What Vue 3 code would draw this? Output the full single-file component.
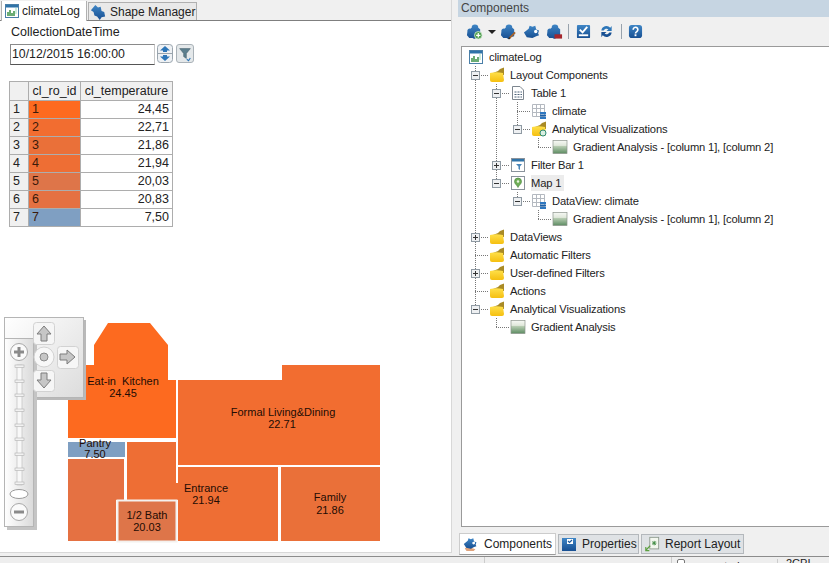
<script setup>
const rows = [
  { id: 1, temp: '24,45', color: '#fd6a1f' },
  { id: 2, temp: '22,71', color: '#f26d30' },
  { id: 3, temp: '21,86', color: '#ea7039' },
  { id: 4, temp: '21,94', color: '#ee6e34' },
  { id: 5, temp: '20,03', color: '#de7549' },
  { id: 6, temp: '20,83', color: '#e57142' },
  { id: 7, temp: '7,50', color: '#7f9fc2' }
];

const tree = [
  { d: 0, icon: 'report', text: 'climateLog' },
  { d: 1, icon: 'folder', text: 'Layout Components', toggle: '-' },
  { d: 2, icon: 'page', text: 'Table 1', toggle: '-' },
  { d: 3, icon: 'grid', text: 'climate' },
  { d: 3, icon: 'folderviz', text: 'Analytical Visualizations', toggle: '-' },
  { d: 4, icon: 'gradient', text: 'Gradient Analysis - [column 1], [column 2]' },
  { d: 2, icon: 'filterbar', text: 'Filter Bar 1', toggle: '+' },
  { d: 2, icon: 'map', text: 'Map 1', toggle: '-', selected: true },
  { d: 3, icon: 'grid', text: 'DataView: climate', toggle: '-' },
  { d: 4, icon: 'gradient', text: 'Gradient Analysis - [column 1], [column 2]' },
  { d: 1, icon: 'folder', text: 'DataViews', toggle: '+' },
  { d: 1, icon: 'folder', text: 'Automatic Filters' },
  { d: 1, icon: 'folder', text: 'User-defined Filters', toggle: '+' },
  { d: 1, icon: 'folder', text: 'Actions' },
  { d: 1, icon: 'folder', text: 'Analytical Visualizations', toggle: '-' },
  { d: 2, icon: 'gradient', text: 'Gradient Analysis' }
];

// page coordinates of the dotted tree guides
const rowY = (i) => 57 + 18 * i;
const guideX = (d) => 475 + 21 * (d - 1);
const vGuides = [
  [guideX(1), rowY(0) + 9, rowY(14)],
  [guideX(2), rowY(1) + 9, rowY(7)],
  [guideX(3), rowY(2) + 9, rowY(4)],
  [guideX(3), rowY(7) + 9, rowY(8)],
  [guideX(4), rowY(4) + 9, rowY(5)],
  [guideX(4), rowY(8) + 9, rowY(9)],
  [guideX(2), rowY(14) + 9, rowY(15)]
];
const hGuides = tree
  .map((r, i) => ({ x1: guideX(r.d), x2: guideX(r.d) + 13, y: rowY(i), d: r.d }))
  .filter((g) => g.d > 0);

const indent = (r) => (r.d === 0 ? 6 : 21 * r.d - 12) + 'px';

const toolbar = ['tbAdd', 'arrow', 'tbEdit', 'tbMove', 'tbDel', 'sep', 'tbCheck', 'tbRefresh', 'sep', 'tbHelp'];

const rooms = [
  { points: '108,323 150,323 168,345 168,380 176,380 176,438 68,438 68,365 94,365 94,345', fill: '#fd6a1f' },
  { points: '178,380 282,380 282,365 380,365 380,465 178,465', fill: '#f26d30' },
  { points: '68,442 125,442 125,457 68,457', fill: '#7f9fc2' },
  { points: '68,459 124,459 124,500 116,500 116,541 68,541', fill: '#e57142' },
  { points: '127,442 176,442 176,483 178,483 178,467 278,467 278,541 178,541 178,500 127,500', fill: '#ee6e34' },
  { points: '281,467 380,467 380,541 281,541', fill: '#ea7039' }
];

const labels = [
  { x: 123, y: 385, text: 'Eat-in  Kitchen' },
  { x: 123, y: 397, text: '24.45' },
  { x: 283, y: 416, text: 'Formal Living&Dining' },
  { x: 282, y: 428, text: '22.71' },
  { x: 95, y: 447, text: 'Pantry' },
  { x: 95, y: 458, text: '7.50' },
  { x: 206, y: 492, text: 'Entrance' },
  { x: 206, y: 504, text: '21.94' },
  { x: 330, y: 501, text: 'Family' },
  { x: 330, y: 514, text: '21.86' },
  { x: 147, y: 519, text: '1/2 Bath' },
  { x: 147, y: 531, text: '20.03' }
];

const ticks = [366, 381, 395, 410, 425, 439, 454, 469, 483];
</script>

<template>
  <div class="app">
    <svg class="defs" width="0" height="0">
      <defs>
        <linearGradient id="gFolder" x1="0" y1="0" x2="0" y2="1"><stop offset="0" stop-color="#ffe04a" /><stop offset="1" stop-color="#f5bf10" /></linearGradient>
        <linearGradient id="gSwatch" x1="0" y1="0" x2="0" y2="1"><stop offset="0" stop-color="#f6f8f4" /><stop offset=".38" stop-color="#e0e8db" /><stop offset=".46" stop-color="#b5cbb0" /><stop offset="1" stop-color="#5d8c62" /></linearGradient>
        <linearGradient id="gBlue" x1="0" y1="0" x2="0" y2="1"><stop offset="0" stop-color="#3f86c6" /><stop offset="1" stop-color="#174f92" /></linearGradient>
        <linearGradient id="gPanel" x1="0" y1="0" x2="1" y2="1"><stop offset="0" stop-color="#ffffff" /><stop offset="1" stop-color="#dcdcdc" /></linearGradient>
        <linearGradient id="gSlider" x1="0" y1="0" x2="1" y2="0"><stop offset="0" stop-color="#ffffff" /><stop offset="1" stop-color="#dadada" /></linearGradient>

        <symbol id="folder" viewBox="0 0 16 16">
          <path d="M4 6L9 4 11 2 15 .5V8H4z" fill="#a98a25" />
          <path d="M1 6Q7 4.500 14 6L15 13Q15 15 13 15H3Q1 15 1 13z" fill="url(#gFolder)" />
        </symbol>
        <symbol id="folderviz" viewBox="0 0 16 16">
          <path d="M4 6L9 4 11 2 15 .5V8H4z" fill="#a98a25" />
          <path d="M1 6Q7 4.500 14 6L15 13Q15 15 13 15H3Q1 15 1 13z" fill="url(#gFolder)" />
          <circle cx="12" cy="12" r="3" fill="#d9efe0" stroke="#2c8a78" />
        </symbol>
        <symbol id="report" viewBox="0 0 16 16">
          <rect x="1.500" y="1.500" width="13" height="13" fill="#fff" stroke="#4a7fa8" />
          <rect x="2" y="2" width="12" height="2.500" fill="#2f73a8" />
          <path d="M4 13V9M6 13V7M8 13V10M10 13V8" stroke="#2d8a3a" stroke-width="1.400" />
          <path d="M11 6h2M11 8h2M11 10h2" stroke="#9db" />
        </symbol>
        <symbol id="page" viewBox="0 0 16 16">
          <path d="M2.500 1.500H10L13.500 5V14.500H2.500z" fill="#fff" stroke="#7d868f" />
          <path d="M4.500 7h2M7.500 7h2M10.500 7h1.500M4.500 9.500h2M7.500 9.500h2M10.500 9.500h1.500M4.500 12h2M7.500 12h2M10.500 12h1.500" stroke="#4d6278" />
        </symbol>
        <symbol id="grid" viewBox="0 0 16 16">
          <path d="M1.500 1.500H13.500V13.500H1.500zM5.500 1.500V13.500M9.500 1.500V13.500M1.500 5.500H13.500M1.500 9.500H13.500" fill="#fff" stroke="#b4b9c0" />
          <rect x="9" y="9" width="6" height="2" fill="#2f78c0" />
          <rect x="9" y="11.500" width="6" height="2" fill="#1f62a8" />
          <rect x="9" y="14" width="6" height="2" fill="#2f78c0" />
        </symbol>
        <symbol id="gradient" viewBox="0 0 16 16">
          <rect x="1" y="1.500" width="14" height="13" fill="url(#gSwatch)" stroke="#8c948c" stroke-width=".7" />
        </symbol>
        <symbol id="filterbar" viewBox="0 0 16 16">
          <rect x="1.500" y="1.500" width="13" height="13" fill="#fff" stroke="#8a939c" />
          <rect x="2" y="2" width="12" height="2.500" fill="#2f73a8" />
          <path d="M6 7h6L10 9.500V13L8.500 12V9.500z" fill="#4a86b8" />
        </symbol>
        <symbol id="map" viewBox="0 0 16 16">
          <rect x="1.500" y="1.500" width="13" height="13" fill="#fff" stroke="#8a939c" />
          <path d="M8 3a3.500 3.500 0 0 1 3.500 3.500C11.500 9 9 10 8 12.500 7 10 4.500 9 4.500 6.500A3.500 3.500 0 0 1 8 3z" fill="#6fae58" stroke="#3f7d35" stroke-width=".6" />
          <circle cx="8" cy="6.500" r="1.200" fill="#e8f5df" />
        </symbol>
        <symbol id="blob" viewBox="0 0 18 18">
          <path d="M6 5a3.500 3.500 0 0 1 7 0l2 1.500V14l-4 1a2.500 2.500 0 0 1-4 1H3.500L1 13 1.500 9a2.500 2.500 0 0 1 3-3z" fill="url(#gBlue)" />
        </symbol>
        <symbol id="tbAdd" viewBox="0 0 18 18">
          <use href="#blob" width="18" height="18" />
          <circle cx="13" cy="13" r="4" fill="#4f9e4f" stroke="#d8eed8" stroke-width=".8" />
          <path d="M13 10.700v4.600M10.700 13h4.600" stroke="#fff" stroke-width="1.300" />
        </symbol>
        <symbol id="tbEdit" viewBox="0 0 18 18">
          <use href="#blob" width="18" height="18" />
          <path d="M10 16l6-6" stroke="#a7632a" stroke-width="2" />
          <path d="M9 17l1.500-1.500" stroke="#222" stroke-width="1.500" />
        </symbol>
        <symbol id="tbMove" viewBox="0 0 18 18">
          <path d="M1 10l5-4 1-3 3 1 3-1 1 4 3 1-1 3 1 2-3 1-4 2-6-1z" fill="url(#gBlue)" />
          <circle cx="13.500" cy="9" r="1.800" fill="#fff" />
        </symbol>
        <symbol id="tbDel" viewBox="0 0 18 18">
          <use href="#blob" width="18" height="18" />
          <rect x="9" y="12" width="8" height="4.500" fill="#a5262c" />
        </symbol>
        <symbol id="tbCheck" viewBox="0 0 16 16">
          <rect x="1" y="1" width="14" height="14" rx="1" fill="url(#gBlue)" />
          <path d="M4 6l3 3 5-6" fill="none" stroke="#fff" stroke-width="2" />
          <rect x="3" y="11" width="10" height="2" fill="#fff" />
        </symbol>
        <symbol id="tbRefresh" viewBox="0 0 16 16">
          <path d="M2.500 7A5.500 5.500 0 0 1 12 4L13.500 2V7.500H8L10 5.500A3.500 3.500 0 0 0 5 7z" fill="#2d76b8" />
          <path d="M13.500 9A5.500 5.500 0 0 1 4 12L2.500 14V8.500H8L6 10.500A3.500 3.500 0 0 0 11 9z" fill="#174f92" />
        </symbol>
        <symbol id="tbHelp" viewBox="0 0 16 16">
          <rect x="1" y="1" width="14" height="14" rx="3" fill="url(#gBlue)" />
          <path d="M5.500 6a2.500 2.500 0 1 1 4 2c-1 .7-1.500 1-1.500 2" fill="none" stroke="#fff" stroke-width="1.800" />
          <rect x="7" y="11" width="2" height="2" fill="#fff" />
        </symbol>
        <symbol id="shape" viewBox="0 0 18 18">
          <path d="M1 7L6 1l3 3 3-1 1 5 3 1 1 5-4 1-2 3-3-4-3-1-1-4z" fill="url(#gBlue)" />
        </symbol>
        <symbol id="tabComponents" viewBox="0 0 18 18">
          <path d="M2 14q3-3 6-1l6 2-2 2H4z" fill="#e0a37c" />
          <use href="#tbMove" width="16" height="16" />
        </symbol>
        <symbol id="tabProps" viewBox="0 0 16 16">
          <rect x="1" y="2" width="14" height="13" fill="url(#gBlue)" />
          <rect x="6" y="3" width="6" height="5" fill="#fff" />
          <path d="M7 5l1.500 1.500L11 4" fill="none" stroke="#1d5a9c" stroke-width="1.200" />
        </symbol>
        <symbol id="tabReport" viewBox="0 0 18 18">
          <rect x="6.500" y="1.500" width="10" height="13" fill="#f3f7ef" stroke="#8e9a8e" />
          <path d="M9 8h5M11.500 5.500v5M9.700 6l3.600 4M13.300 6l-3.600 4" stroke="#3d8a40" />
          <path d="M7 11l-5 5M2 12.500V16.500H6" fill="none" stroke="#5ca03f" stroke-width="1.300" />
        </symbol>
      </defs>
    </svg>

    <div class="main">
      <div class="left">
        <div class="doc-tabs">
          <div class="doc-tab active">
            <svg class="ico"><use href="#report" width="16" height="16" /></svg>
            <span>climateLog</span>
          </div>
          <div class="doc-tab">
            <svg class="ico"><use href="#shape" width="16" height="16" /></svg>
            <span>Shape Manager</span>
          </div>
        </div>

        <div class="filter">
          <div class="filter-label">CollectionDateTime</div>
          <div class="filter-row">
            <div class="date-input">10/12/2015 16:00:00</div>
            <div class="spin">
              <svg width="16" height="19" viewBox="0 0 16 19">
                <rect x=".5" y=".5" width="15" height="18" rx="3" fill="#eef1f4" stroke="#9aa5ae" />
                <path d="M8 2l5 4.500H10V8H6V6.500H3z" fill="#2d76b8" />
                <path d="M8 17l5-4.500H10V11H6v1.500H3z" fill="#2d76b8" />
                <path d="M1 9.500h14" stroke="#9aa5ae" />
              </svg>
            </div>
            <div class="funnel">
              <svg width="16" height="17" viewBox="0 0 18 19">
                <path d="M3 4h12L10.500 9.500V15L7.500 13V9.500z" fill="#5c7f8e" stroke="#3f5966" stroke-width=".6" />
                <path d="M11 16l2 1.500 2-3" fill="none" stroke="#2d76b8" stroke-width="1.200" />
              </svg>
            </div>
          </div>
        </div>

        <table class="grid-table">
          <thead>
            <tr>
              <th class="c-n"></th>
              <th class="c-id">cl_ro_id</th>
              <th class="c-temp">cl_temperature</th>
            </tr>
          </thead>
          <tbody>
            <tr v-for="(r, i) in rows" :key="r.id">
              <td class="row-no">{{ i + 1 }}</td>
              <td class="id-cell" :style="{ background: r.color }">{{ r.id }}</td>
              <td class="temp-cell">{{ r.temp }}</td>
            </tr>
          </tbody>
        </table>

        <div class="map">
          <svg class="map-svg" viewBox="0 250 451 302" width="451" height="302">
            <polygon v-for="(room, i) in rooms" :key="i" :points="room.points" :fill="room.fill" />
            <rect x="117.500" y="500.500" width="59" height="41" fill="#de7549" stroke="#f4f1ee" stroke-width="2" />
            <text v-for="l in labels" :key="l.text" :x="l.x" :y="l.y" class="room-label">{{ l.text }}</text>

            <!-- zoom and pan control lying on the map -->
            <rect x="7" y="320" width="79" height="80" fill="#b9b9b9" />
            <rect x="4.500" y="317.500" width="79" height="80" fill="url(#gPanel)" stroke="#b5b5b5" />
            <rect x="7" y="341" width="30" height="189" fill="#c4c4c4" />
            <rect x="4.500" y="338.500" width="29" height="188" fill="url(#gSlider)" stroke="#b5b5b5" />

            <rect x="33.500" y="322.500" width="21" height="22" rx="3" fill="#f6f6f6" stroke="#d2d2d2" />
            <path d="M44 326l7 8h-4v7h-6v-7h-4z" fill="#c6c6c6" stroke="#7d7d7d" />
            <circle cx="44" cy="357" r="10" fill="#f8f8f8" stroke="#d2d2d2" />
            <circle cx="44" cy="357" r="4" fill="#c6c6c6" stroke="#8a8a8a" />
            <rect x="57.500" y="346.500" width="21" height="22" rx="3" fill="#f6f6f6" stroke="#d2d2d2" />
            <path d="M75 357l-8 7v-4h-7v-6h7v-4z" fill="#c6c6c6" stroke="#7d7d7d" />
            <rect x="33.500" y="370.500" width="21" height="21" rx="3" fill="#f6f6f6" stroke="#d2d2d2" />
            <path d="M44 388l7-8h-4v-7h-6v7h-4z" fill="#c6c6c6" stroke="#7d7d7d" />

            <circle cx="19" cy="352" r="8.500" fill="#fafafa" stroke="#a8a8a8" />
            <path d="M19 347v10M14 352h10" stroke="#8a8a8a" stroke-width="3" />
            <rect x="17" y="365" width="5" height="120" fill="#f8f8f8" stroke="#c0c0c0" stroke-width=".7" />
            <rect v-for="t in ticks" :key="t" x="15" :y="t - 1" width="9" height="2.500" fill="#f2f2f2" stroke="#b0b0b0" stroke-width=".6" />
            <ellipse cx="19" cy="494" rx="9" ry="4.500" fill="#fff" stroke="#9a9a9a" />
            <circle cx="19" cy="512" r="8.500" fill="#fafafa" stroke="#a8a8a8" />
            <path d="M14 512h10" stroke="#8a8a8a" stroke-width="3" />
          </svg>
        </div>
      </div>

      <div class="right">
        <div class="pane-title">Components</div>
        <div class="toolbar">
          <template v-for="(b, i) in toolbar" :key="i">
            <span v-if="b === 'sep'" class="tb-sep"></span>
            <span v-else-if="b === 'arrow'" class="tb-arrow"></span>
            <svg v-else class="tb-ico" :class="b"><use :href="'#' + b" width="100%" height="100%" /></svg>
          </template>
        </div>

        <div class="tree">
          <svg class="tree-lines" viewBox="462 47 367 480" width="367" height="480">
            <line v-for="(g, i) in vGuides" :key="'v' + i" :x1="g[0] + 0.5" :x2="g[0] + 0.5" :y1="g[1]" :y2="g[2]" class="guide" />
            <line v-for="(g, i) in hGuides" :key="'h' + i" :x1="g.x1" :x2="g.x2" :y1="g.y + 0.5" :y2="g.y + 0.5" class="guide" />
          </svg>
          <div v-for="(r, i) in tree" :key="i" class="tree-row" :style="{ paddingLeft: indent(r) }">
            <span v-if="r.d > 0" class="toggle-slot">
              <span v-if="r.toggle" class="toggle">
                <i class="h"></i>
                <i v-if="r.toggle === '+'" class="v"></i>
              </span>
            </span>
            <svg class="ico tree-ico"><use :href="'#' + r.icon" width="16" height="16" /></svg>
            <span class="tree-text" :class="{ selected: r.selected }">{{ r.text }}</span>
          </div>
        </div>

        <div class="pane-tabs">
          <div class="pane-tab active">
            <svg class="ico"><use href="#tabComponents" width="16" height="16" /></svg>
            <span>Components</span>
          </div>
          <div class="pane-tab">
            <svg class="ico"><use href="#tabProps" width="16" height="16" /></svg>
            <span>Properties</span>
          </div>
          <div class="pane-tab">
            <svg class="ico"><use href="#tabReport" width="16" height="16" /></svg>
            <span>Report Layout</span>
          </div>
        </div>
      </div>
    </div>

    <div class="status">
      <span class="status-a"></span>
      <span class="status-b"></span>
      <span class="status-text"><i class="status-icon"></i>generated</span>
      <span class="status-end">2CPI</span>
    </div>
  </div>
</template>

<style scoped>
.app {
  width: 829px;
  height: 563px;
  display: flex;
  flex-direction: column;
  overflow: hidden;
  background: #f0f0f0;
  font-family: "Liberation Sans", Arial, sans-serif;
  font-size: 12px;
  color: #222;
}

.defs {
  position: absolute;
}

.main {
  height: 556px;
  display: flex;
  border-bottom: 1px solid #8c8c8c;
  flex: none;
}

/* left document area */
.left {
  width: 451px;
  height: 552px;
  background: #fff;
  border-right: 1px solid #d8d8d8;
  border-bottom: 1px solid #d8d8d8;
  display: flex;
  flex-direction: column;
  flex: none;
}

.doc-tabs {
  height: 20px;
  flex: none;
  display: flex;
  align-items: flex-end;
  padding-left: 1px;
  gap: 1px;
  background: #f0f0f0;
  border-bottom: 1px solid #7f7f7f;
}

.doc-tab {
  width: 109px;
  height: 18px;
  display: flex;
  align-items: center;
  gap: 4px;
  padding-left: 1px;
  white-space: nowrap;
  background: #e9e9e9;
  border: 1px solid #b0b0b0;
  border-bottom: none;
  box-sizing: border-box;
}

.doc-tab.active {
  width: 86px;
  height: 20px;
  gap: 2px;
  padding-left: 2px;
  background: #fff;
  border-top: none;
  margin-bottom: -1px;
}

.ico {
  width: 16px;
  height: 16px;
  flex: none;
}

.filter {
  padding: 4px 0 0 10px;
  flex: none;
}

.filter-label {
  font-size: 12.500px;
  padding-left: 1px;
  line-height: 14px;
  margin-bottom: 5px;
}

.filter-row {
  display: flex;
  align-items: flex-start;
  gap: 2px;
}

.date-input {
  width: 145px;
  height: 21px;
  box-sizing: border-box;
  border: 1px solid #8a8a8a;
  border-right-color: #c8c8c8;
  border-bottom-color: #555;
  line-height: 19px;
  padding-left: 1px;
  font-size: 12.300px;
}

.spin,
.funnel {
  height: 19px;
  display: flex;
}

.funnel {
  margin-left: 1px;
  box-sizing: border-box;
  background: #e4e8ea;
  border: 1px solid #aab2b8;
  border-radius: 3px;
}

.grid-table {
  margin: 16px 0 0 9px;
  border-collapse: collapse;
  table-layout: fixed;
  width: 163px;
  flex: none;
  font-size: 12.500px;
}

.grid-table th,
.grid-table td {
  border: 1px solid #adadad;
  height: 18px;
  padding: 0 3px;
  line-height: 15px;
  overflow: hidden;
  white-space: nowrap;
  box-sizing: border-box;
}

.grid-table th {
  background: #f0f0f0;
  font-weight: normal;
  text-align: center;
  height: 19px;
  padding: 0;
}

.c-n { width: 19px; }
.c-id { width: 52px; }
.c-temp { width: 92px; }

.row-no {
  background: #f0f0f0;
}

.id-cell {
  color: #3b1a0a;
}

.temp-cell {
  text-align: right;
  background: #fff;
  border-color: #d0d0d0;
}

.map {
  flex: 1;
  display: flex;
  align-items: flex-end;
  min-height: 0;
}

.map-svg {
  display: block;
}

.room-label {
  font-size: 11px;
  fill: #230c04;
  text-anchor: middle;
  white-space: pre;
}

/* right components pane */
.right {
  flex: 1;
  min-width: 0;
  margin-left: 6px;
  display: flex;
  flex-direction: column;
}

.pane-title {
  height: 17px;
  line-height: 16px;
  background: #c6d5e2;
  padding-left: 3px;
  color: #444;
  font-size: 12px;
  flex: none;
}

.toolbar {
  height: 29px;
  flex: none;
  display: flex;
  align-items: center;
  padding-left: 8px;
}

.tb-ico {
  width: 17px;
  height: 17px;
  margin-right: 6px;
  flex: none;
}

.tbCheck,
.tbRefresh {
  width: 15px;
  height: 15px;
  margin-right: 8px;
}

.tbHelp {
  width: 15px;
  height: 15px;
  margin-left: -1px;
}

.tb-arrow {
  width: 0;
  height: 0;
  border-left: 4px solid transparent;
  border-right: 4px solid transparent;
  border-top: 4px solid #222;
  margin: 0 4px 0 -1px;
}

.tb-sep {
  width: 1px;
  height: 15px;
  background: #98a2ac;
  margin: 0 7px 0 -1px;
}

.tree {
  position: relative;
  height: 481px;
  flex: none;
  margin-left: 3px;
  margin-right: -3px;
  padding-top: 1px;
  box-sizing: border-box;
  background: #fff;
  border: 1px solid #9a9a9a;
}

.tree-lines {
  position: absolute;
  left: 0;
  top: 0;
}

.guide {
  stroke: #777;
  stroke-width: 1;
  stroke-dasharray: 1 1;
}

.tree-row {
  position: relative;
  height: 18px;
  display: flex;
  align-items: center;
}

.toggle-slot {
  width: 18px;
  flex: none;
  display: flex;
}

.toggle {
  position: relative;
  width: 9px;
  height: 9px;
  box-sizing: border-box;
  background: #eef0f2;
  border: 1px solid #8f9aa3;
}

.toggle .h {
  position: absolute;
  left: 1px;
  top: 3px;
  width: 5px;
  height: 1px;
  background: #333;
}

.toggle .v {
  position: absolute;
  left: 3px;
  top: 1px;
  width: 1px;
  height: 5px;
  background: #333;
}

.tree-text {
  margin-left: 5px;
  padding: 1px 0;
  white-space: nowrap;
  font-size: 11.200px;
  letter-spacing: -0.150px;
}

.tree-text.selected {
  background: #ececec;
  padding: 2px 3px 2px 0;
}

.pane-tabs {
  flex: none;
  display: flex;
  margin: 6px 0 0 1px;
  gap: 2px;
}

.pane-tab {
  width: 81px;
  height: 20px;
  box-sizing: border-box;
  display: flex;
  align-items: center;
  gap: 5px;
  padding-left: 2px;
  background: #dfe2e5;
  border: 1px solid #b4b8bc;
  margin-top: 1px;
}

.pane-tab:last-child {
  width: 103px;
}

.pane-tab.active {
  width: 97px;
  height: 22px;
  margin-top: 0;
  padding-left: 3px;
  background: #fff;
  border-color: #ccc;
  border-bottom: 1px solid #999;
}

.status {
  flex: 1;
  display: flex;
  background: #eeeeee;
  font-size: 11px;
  overflow: hidden;
  min-height: 0;
}

.status-a {
  width: 485px;
  box-sizing: border-box;
  border-right: 1px solid #ccc;
}

.status-b {
  width: 187px;
  box-sizing: border-box;
  border-right: 1px solid #ccc;
}

.status-text {
  width: 106px;
  box-sizing: border-box;
  display: flex;
  gap: 5px;
  margin-top: 2px;
  padding-left: 5px;
  border-right: 1px solid #ccc;
  line-height: 14px;
}

.status-icon {
  width: 8px;
  height: 10px;
  box-sizing: border-box;
  border: 1px solid #777;
  border-radius: 2px;
  background: #fff;
}

.status-end {
  padding-left: 8px;
  line-height: 12px;
}
</style>

<style>
body {
  margin: 0;
  background: #f0f0f0;
  overflow: hidden;
}
</style>
